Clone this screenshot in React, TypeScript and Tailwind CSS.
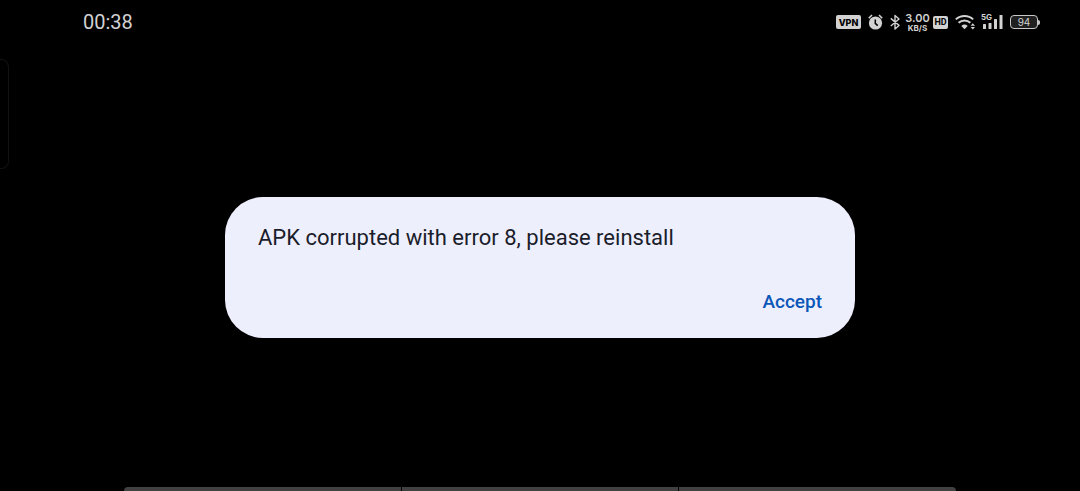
function VpnBadge() {
  return (
    <span className="flex h-[14px] w-[25px] items-center justify-center rounded-[2px] bg-[#d2d2d2] font-['Inter','Roboto',sans-serif] text-[9px] leading-none font-extrabold text-black">
      VPN
    </span>
  );
}

function AlarmIcon() {
  return (
    <svg className="ml-[7px] h-4 w-[15px]" viewBox="0 0 15 16" fill="none" aria-hidden="true">
      <circle cx="7.5" cy="9" r="6.6" fill="#d2d2d2" />
      <path d="M0.8 4.2 4 1M14.2 4.2 11 1" stroke="#d2d2d2" strokeWidth="1.6" />
      <path d="M7.3 5.6v3.8l2.4 2.2" stroke="#000" strokeWidth="1.5" />
    </svg>
  );
}

function BluetoothIcon() {
  return (
    <svg className="ml-[7px] h-4 w-[10px]" viewBox="0 0 10 16" fill="none" aria-hidden="true">
      <path
        d="M0.8 4.4 9 11.4 5 15V1.4l4 3.6L0.8 12"
        stroke="#d2d2d2"
        strokeWidth="1.4"
        strokeLinejoin="round"
      />
    </svg>
  );
}

function NetworkSpeed() {
  return (
    <span className="ml-[6px] flex w-[23px] flex-col items-center font-['Inter','Roboto',sans-serif] font-semibold whitespace-nowrap">
      <span className="text-[11px] leading-[11px]">3.00</span>
      <span className="text-[8px] leading-[8px] font-bold">KB/S</span>
    </span>
  );
}

function HdBadge() {
  return (
    <span className="ml-[4px] flex h-[13px] w-[15px] items-center justify-center rounded-[2px] bg-[#d2d2d2] font-['Roboto','Liberation_Sans',sans-serif] text-[9px] leading-none font-bold text-black">
      HD
    </span>
  );
}

function WifiIcon() {
  return (
    <svg className="ml-[7px] h-4 w-[21px]" viewBox="0 0 21 16" fill="none" aria-hidden="true">
      <path
        d="M0.8 5.4a12.8 12.8 0 0 1 17.4 0M3.6 8.8a8.8 8.8 0 0 1 11.8 0"
        stroke="#d2d2d2"
        strokeWidth="1.9"
      />
      <path d="M6.3 11.9a4.8 4.8 0 0 1 6.4 0L9.5 15.2Z" fill="#d2d2d2" />
      <path d="m15.6 11.8 2.2-2.6 2.2 2.6ZM15.6 13l2.2 2.6 2.2-2.6Z" fill="#d2d2d2" />
    </svg>
  );
}

function SignalIcon() {
  return (
    <span className="relative ml-[5px] h-4 w-[22px]">
      <span className="absolute -top-px left-0 font-['Inter','Roboto',sans-serif] text-[8px] leading-[9px] font-bold">
        5G
      </span>
      <svg className="h-4 w-[22px]" viewBox="0 0 22 16" fill="#d2d2d2" aria-hidden="true">
        <rect x="2" y="10" width="3" height="5" rx="0.5" />
        <rect x="7.5" y="9" width="3" height="6" rx="0.5" />
        <rect x="13" y="5" width="3" height="10" rx="0.5" />
        <rect x="18.5" y="1" width="3" height="14" rx="0.5" />
      </svg>
    </span>
  );
}

function Battery({ level }: { level: number }) {
  return (
    <span className="ml-[7px] flex items-center">
      <span className="flex h-[14px] w-[28px] items-center justify-center rounded-[4px] border border-[#c8c8c8] bg-[#202020] font-['Inter','Roboto',sans-serif] text-[10px] leading-none">
        {level}
      </span>
      <span className="h-[5px] w-[2px] rounded-r-sm bg-[#c8c8c8]" />
    </span>
  );
}

function StatusBar() {
  return (
    <header className="flex h-12 items-center justify-between pr-10 pb-1 pl-[83px] text-[#d2d2d2]">
      <time className="text-[20px] leading-6">00:38</time>
      <div className="flex items-center">
        <VpnBadge />
        <AlarmIcon />
        <BluetoothIcon />
        <NetworkSpeed />
        <HdBadge />
        <WifiIcon />
        <SignalIcon />
        <Battery level={94} />
      </div>
    </header>
  );
}

function ErrorDialog() {
  return (
    <div
      role="alertdialog"
      aria-describedby="dialog-message"
      className="flex w-7/12 flex-col rounded-[38px] bg-[#eeeffd] px-[33px] pt-[27px] pb-[22px]"
    >
      <p id="dialog-message" className="text-[22px] leading-7 text-[#1b1d2a]">
        APK corrupted with error 8, please reinstall
      </p>
      <button type="button" className="mt-9 self-end text-[19px] leading-7 font-medium text-[#0b57b9]">
        Accept
      </button>
    </div>
  );
}

export default function App() {
  return (
    <div className="relative flex h-screen flex-col overflow-hidden bg-black font-['Roboto','Liberation_Sans',sans-serif]">
      <StatusBar />
      <div className="absolute top-[59px] left-0 h-[110px] w-[9px] rounded-r-lg border border-l-0 border-[#121212]" />
      <main className="flex flex-1 items-center justify-center">
        <ErrorDialog />
      </main>
      <div className="flex h-1 gap-px px-[124px]">
        <div className="flex-1 rounded-tl-sm bg-[#414141]" />
        <div className="flex-1 bg-[#414141]" />
        <div className="flex-1 rounded-tr-sm bg-[#414141]" />
      </div>
    </div>
  );
}
